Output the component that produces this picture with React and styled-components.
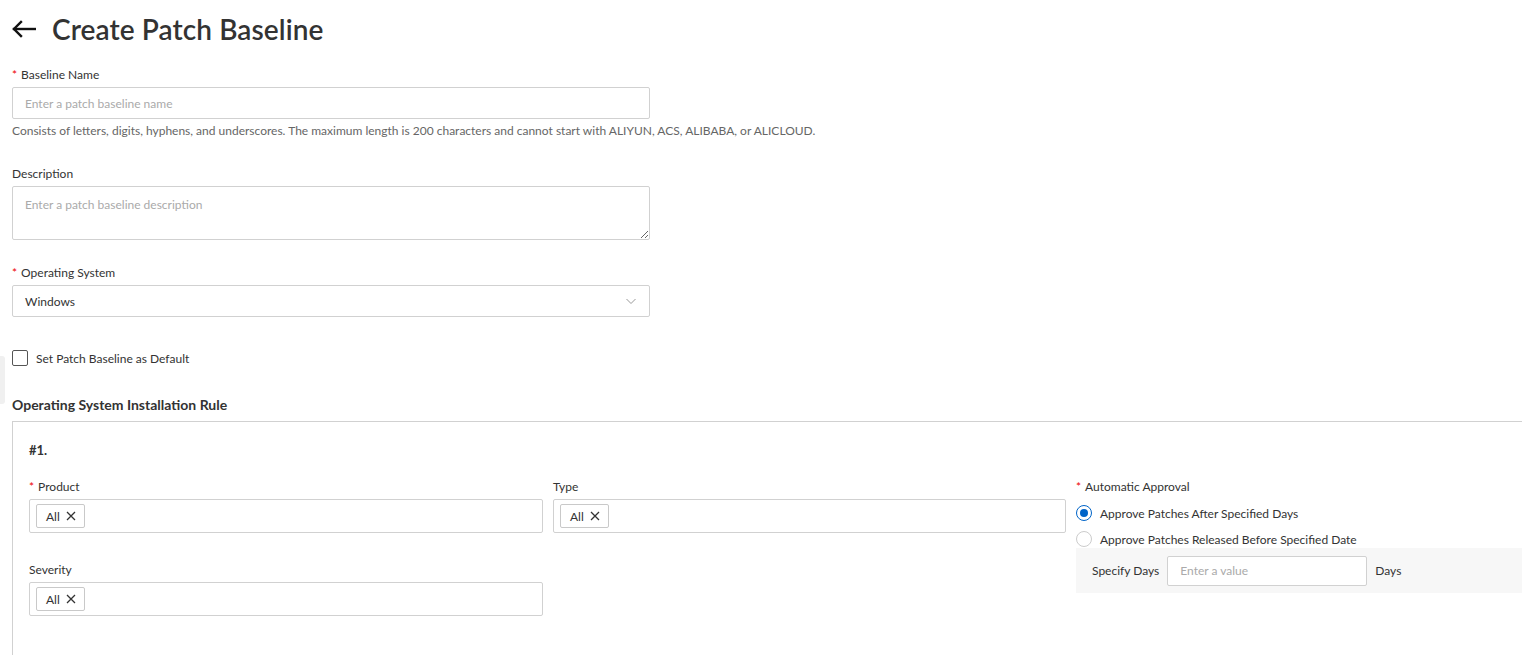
import React from "react";
import styled, { createGlobalStyle } from "styled-components";

const GlobalStyle = createGlobalStyle`
  html, body {
    margin: 0;
    padding: 0;
    background: #fff;
    overflow: hidden;
  }
  body {
    font-family: Lato, "Noto Sans", Arial, sans-serif;
    color: #333;
  }
  * { box-sizing: border-box; }
`;

const Page = styled.div`
  position: relative;
  width: 1522px;
  height: 655px;
  overflow: hidden;
  padding: 0 0 0 12px;
`;

const SideHandle = styled.div`
  position: absolute;
  left: 0;
  top: 356px;
  width: 5px;
  height: 48px;
  background: #f0f0f0;
  border-radius: 0 3px 3px 0;
`;

const Header = styled.div`
  display: flex;
  align-items: center;
  gap: 16px;
  height: 65px;
  padding-bottom: 7px;
  margin-bottom: 1px;
`;

const BackButton = styled.button`
  border: 0;
  background: none;
  padding: 0;
  width: 24px;
  height: 24px;
  display: flex;
  align-items: center;
  cursor: pointer;
`;

const Title = styled.h1`
  margin: 0;
  font-size: 28px;
  font-weight: 600;
  color: #333;
  letter-spacing: 0.1px;
`;

const Field = styled.div`
  width: 638px;
  margin-bottom: ${(p) => p.$mb || "0"};
`;

const Label = styled.div`
  font-size: 12px;
  line-height: 18px;
  color: #333;
  margin-bottom: 3px;
  display: flex;
  align-items: center;
`;

const Star = styled.span`
  color: #e00;
  margin-right: 4px;
  font-size: 12px;
`;

const TextInput = styled.input`
  display: block;
  width: 100%;
  height: 32px;
  border: 1px solid #d1d1d1;
  border-radius: 2px;
  padding: 0 12px;
  font-family: inherit;
  font-size: 12px;
  color: #333;
  background: #fff;
  outline: none;
  &::placeholder { color: #aaa; }
`;

const TextArea = styled.textarea`
  display: block;
  width: 100%;
  height: 54px;
  border: 1px solid #d1d1d1;
  border-radius: 2px;
  padding: 10px 12px;
  font-family: inherit;
  font-size: 12px;
  color: #333;
  resize: vertical;
  outline: none;
  &::placeholder { color: #aaa; }
`;

const Help = styled.div`
  width: 1000px;
  font-size: 12px;
  line-height: 18px;
  color: #666;
  margin-top: 3px;
`;

const Select = styled.div`
  height: 32px;
  border: 1px solid #d1d1d1;
  border-radius: 2px;
  padding: 0 12px;
  display: flex;
  align-items: center;
  justify-content: space-between;
  font-size: 12px;
  color: #333;
`;

const CheckRow = styled.label`
  display: flex;
  align-items: center;
  gap: 8px;
  font-size: 12px;
  color: #333;
  margin-bottom: 29px;
`;

const CheckBox = styled.span`
  width: 16px;
  height: 16px;
  border: 1px solid #555;
  border-radius: 2px;
  background: #fff;
`;

const SectionTitle = styled.h2`
  margin: 0 0 6px;
  font-size: 14px;
  font-weight: 700;
  color: #333;
  line-height: 20px;
`;

const RuleBox = styled.div`
  width: 1600px;
  height: 240px;
  border: 1px solid #d1d1d1;
  border-bottom: 0;
  padding: 20px 16px 40px;
`;

const RuleIndex = styled.div`
  font-size: 13px;
  font-weight: 700;
  color: #333;
  margin-bottom: 20px;
`;

const RuleGrid = styled.div`
  display: grid;
  grid-template-columns: 514px 513px 446px;
  column-gap: 10px;
  row-gap: 28px;
  align-items: start;
`;

const TagInput = styled.div`
  height: 34px;
  border: 1px solid #d1d1d1;
  border-radius: 2px;
  padding: 0 6px;
  display: flex;
  align-items: center;
  background: #fff;
`;

const Tag = styled.span`
  height: 24px;
  border: 1px solid #c9c9c9;
  border-radius: 2px;
  padding: 0 8px 0 9px;
  display: inline-flex;
  align-items: center;
  gap: 6px;
  font-size: 12px;
  color: #333;
`;

const ApprovalCol = styled.div`
  grid-row: span 2;
`;

const RadioGroup = styled.div`
  padding-top: 1px;
`;

const RadioRow = styled.label`
  display: flex;
  align-items: center;
  gap: 8px;
  height: 26px;
  font-size: 12px;
  color: #333;
`;

const Radio = styled.span`
  width: 16px;
  height: 16px;
  border-radius: 50%;
  border: 1px solid ${(p) => (p.$checked ? "#0064c8" : "#ccc")};
  background: #fff;
  display: flex;
  align-items: center;
  justify-content: center;
  &::after {
    content: "";
    width: 8px;
    height: 8px;
    border-radius: 50%;
    background: ${(p) => (p.$checked ? "#0064c8" : "transparent")};
  }
`;

const DaysPanel = styled.div`
  margin-top: -4px;
  background: #f7f7f7;
  height: 45px;
  padding: 0 16px;
  display: flex;
  align-items: center;
  gap: 8px;
  font-size: 12px;
  color: #333;
`;

const DaysInput = styled.input`
  width: 200px;
  height: 30px;
  border: 1px solid #d1d1d1;
  border-radius: 2px;
  padding: 0 12px;
  font-family: inherit;
  font-size: 12px;
  background: #fff;
  outline: none;
  &::placeholder { color: #aaa; }
`;

function ArrowLeft() {
  return (
    <svg width="24" height="24" viewBox="0 0 24 24" fill="none" stroke="#111" strokeWidth="2.4" strokeLinecap="square">
      <path d="M2 12h21" />
      <path d="M9 5l-7 7 7 7" />
    </svg>
  );
}

function ChevronDown() {
  return (
    <svg width="12" height="12" viewBox="0 0 12 12" fill="none" stroke="#999" strokeWidth="1">
      <path d="M1.5 4l4.5 4.5L10.5 4" />
    </svg>
  );
}

function Close() {
  return (
    <svg width="10" height="10" viewBox="0 0 10 10" stroke="#333" strokeWidth="1.3">
      <path d="M1 1l8 8M9 1l-8 8" />
    </svg>
  );
}

function AllTag() {
  return (
    <TagInput>
      <Tag>
        All <Close />
      </Tag>
    </TagInput>
  );
}

export default function App() {
  return (
    <>
      <GlobalStyle />
      <Page>
        <SideHandle />
        <Header>
          <BackButton aria-label="Back">
            <ArrowLeft />
          </BackButton>
          <Title>Create Patch Baseline</Title>
        </Header>

        <Field $mb="25px">
          <Label><Star>*</Star>Baseline Name</Label>
          <TextInput placeholder="Enter a patch baseline name" />
          <Help>
            Consists of letters, digits, hyphens, and underscores. The maximum length is 200 characters and cannot start with ALIYUN, ACS, ALIBABA, or ALICLOUD.
          </Help>
        </Field>

        <Field $mb="24px">
          <Label>Description</Label>
          <TextArea placeholder="Enter a patch baseline description" />
        </Field>

        <Field $mb="33px">
          <Label><Star>*</Star>Operating System</Label>
          <Select>
            Windows
            <ChevronDown />
          </Select>
        </Field>

        <CheckRow>
          <CheckBox />
          Set Patch Baseline as Default
        </CheckRow>

        <SectionTitle>Operating System Installation Rule</SectionTitle>
        <RuleBox>
          <RuleIndex>#1.</RuleIndex>
          <RuleGrid>
            <div>
              <Label><Star>*</Star>Product</Label>
              <AllTag />
            </div>
            <div>
              <Label>Type</Label>
              <AllTag />
            </div>
            <ApprovalCol>
              <Label><Star>*</Star>Automatic Approval</Label>
              <RadioGroup>
                <RadioRow>
                  <Radio $checked />
                  Approve Patches After Specified Days
                </RadioRow>
                <RadioRow>
                  <Radio />
                  Approve Patches Released Before Specified Date
                </RadioRow>
              </RadioGroup>
              <DaysPanel>
                Specify Days
                <DaysInput placeholder="Enter a value" />
                Days
              </DaysPanel>
            </ApprovalCol>
            <div>
              <Label>Severity</Label>
              <AllTag />
            </div>
          </RuleGrid>
        </RuleBox>
      </Page>
    </>
  );
}
